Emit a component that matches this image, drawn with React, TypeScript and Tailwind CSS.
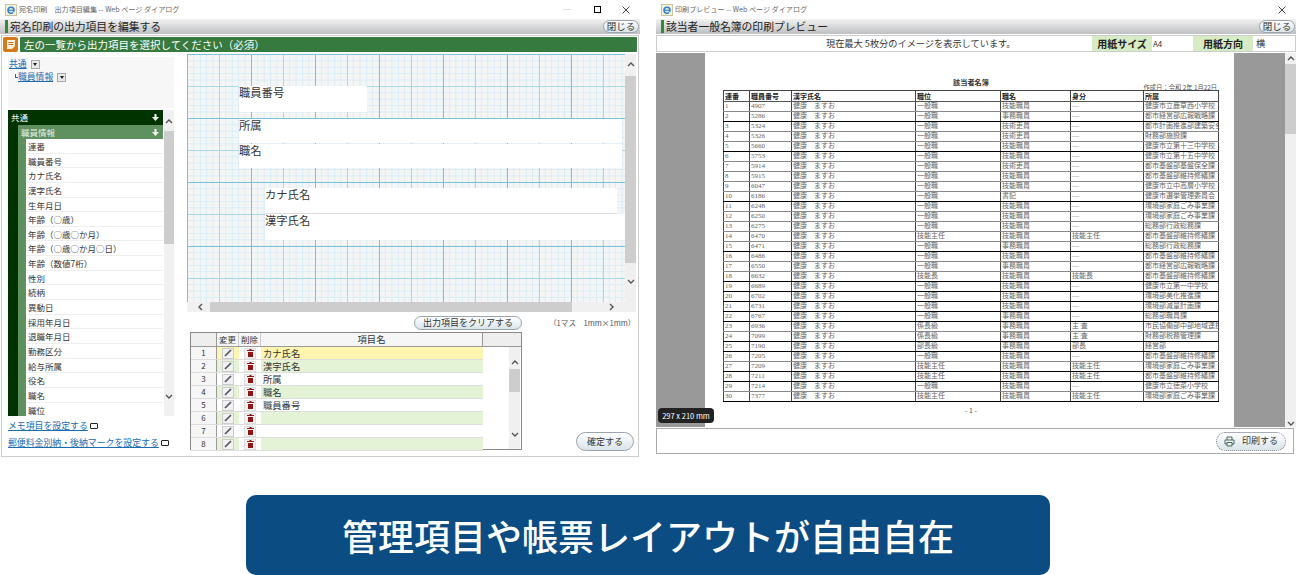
import React from "react";

const treeRows = ["連番","職員番号","カナ氏名","漢字氏名","生年月日","年齢（○歳）","年齢（○歳○か月）","年齢（○歳○か月○日）","年齢（数値7桁）","性別","続柄","異動日","採用年月日","退職年月日","勤務区分","給与所属","役名","職名","職位"];
const outputRows = ["カナ氏名","漢字氏名","所属","職名","職員番号","","",""];

const people: string[][] = [
  ["4907","一般職","技能職員","—","健康市立鹿草西小学校"],
  ["5286","一般職","事務職員","—","都市経営部広報戦略課"],
  ["5324","一般職","技術吏員","—","都市計画推進部建築安全課"],
  ["5326","一般職","技術吏員","—","財務部施設課"],
  ["5660","一般職","技能職員","—","健康市立第十三中学校"],
  ["5753","一般職","技能職員","—","健康市立第十五中学校"],
  ["5914","一般職","技術吏員","—","都市基盤部基盤保全課"],
  ["5915","一般職","技能職員","—","都市基盤部維持修繕課"],
  ["6047","一般職","技能職員","—","健康市立中高層小学校"],
  ["6186","一般職","書記","—","健康市選挙管理委員会"],
  ["6248","一般職","技能職員","—","環境部家庭ごみ事業課"],
  ["6250","一般職","技能職員","—","環境部家庭ごみ事業課"],
  ["6275","一般職","技能職員","—","総務部行政総務課"],
  ["6470","技能主任","技能職員","技能主任","都市基盤部維持修繕課"],
  ["6471","一般職","事務職員","—","総務部行政総務課"],
  ["6486","一般職","技能職員","—","都市基盤部維持修繕課"],
  ["6550","一般職","事務職員","—","都市経営部広報戦略課"],
  ["6632","技能長","技能職員","技能長","都市基盤部維持修繕課"],
  ["6689","一般職","技能職員","—","健康市立第一中学校"],
  ["6702","一般職","技能職員","—","環境部美化推進課"],
  ["6731","一般職","技能職員","—","環境部減量計画課"],
  ["6767","一般職","事務職員","—","総務部職員課"],
  ["6936","係長級","事務職員","主 査","市民協働部中部地域連携課"],
  ["7099","係長級","事務職員","主 査","財務部税務管理課"],
  ["7190","部長級","事務職員","部長","経営部"],
  ["7205","一般職","技能職員","—","都市基盤部維持修繕課"],
  ["7209","技能主任","技能職員","技能主任","環境部家庭ごみ事業課"],
  ["7211","技能主任","技能職員","技能主任","都市基盤部維持修繕課"],
  ["7214","一般職","技能職員","—","健康市立徳菜小学校"],
  ["7377","技能主任","技能職員","技能主任","環境部家庭ごみ事業課"],
];

// row lines that came out black in the downscaled shot
const blackLines = [2, 5, 10, 15, 18, 19, 20, 21, 22, 24, 25, 27, 28, 30];

const IeIcon = () => (
  <svg width="12" height="12" viewBox="0 0 12 12" className="shrink-0">
    <rect x="0.5" y="0.5" width="11" height="11" fill="#f4f1dc" stroke="#c9c4a0" />
    <circle cx="6" cy="6.2" r="3" fill="none" stroke="#2f7fd0" strokeWidth="1.5" />
    <path d="M3 6.2h6" stroke="#2f7fd0" strokeWidth="1.2" />
    <path d="M8 8.5l2 .5" stroke="#f4f1dc" strokeWidth="1.5" />
  </svg>
);

const Chevron = ({ dir }: { dir: "up" | "down" | "left" | "right" }) => {
  const d = { up: "M1 5l3-3 3 3", down: "M1 3l3 3 3-3", left: "M5 1L2 4l3 3", right: "M3 1l3 3-3 3" }[dir];
  return (
    <svg width="8" height="8" viewBox="0 0 8 8" className="shrink-0">
      <path d={d} fill="none" stroke="#555" strokeWidth="1.4" />
    </svg>
  );
};

const DownArrow = () => (
  <svg width="7" height="7" viewBox="0 0 7 7" className="mr-[1px] shrink-0">
    <path d="M2.5 0h2v3H7L3.5 7 0 3h2.5z" fill="#f2f6f2" />
  </svg>
);

const Dropdown = () => (
  <span className="inline-flex h-[9px] w-[9px] items-center justify-center border border-[#aaa] bg-[#e8e8e8]">
    <span className="h-0 w-0 border-x-[2.5px] border-t-[3px] border-x-transparent border-t-[#222]" />
  </span>
);

const PillButton = ({ label, className }: { label: string; className: string }) => (
  <div className={`flex items-center justify-center rounded-full border border-[#9aa5ad] bg-gradient-to-b from-white to-[#d9e4ea] text-[#333] ${className}`}>
    {label}
  </div>
);

const WinLink = () => (
  <span className="ml-[2px] inline-block h-[6px] w-[8px] rounded-[1px] border border-[#222]" />
);

const TitleBar = ({ title, full }: { title: string; full?: boolean }) => (
  <div className="flex h-[19px] items-center pl-[5px] text-[7.1px] text-[#666]">
    <IeIcon />
    <span className="ml-[2px] whitespace-pre">{title}</span>
    <div className="ml-auto flex items-center">
      {full && <span className="mr-[23px] h-px w-[8px] bg-[#ddd]" />}
      {full && <span className="mr-[21px] h-[7px] w-[7px] border border-black" />}
      <svg width="8" height="8" viewBox="0 0 8 8" className="mr-[10px]">
        <path d="M.5.5l7 7M7.5.5l-7 7" stroke="#444" />
      </svg>
    </div>
  </div>
);

const HeadBar = ({ title }: { title: string }) => (
  <div className="flex h-[15px] items-center bg-gradient-to-b from-[#f2f2f2] to-[#bfc0c3] pl-[5px] text-[10.8px] text-[#222]">
    <span className="mr-[2px] h-[13px] w-[3px] bg-[#2e8b3a]" />
    <span className="whitespace-nowrap">{title}</span>
    <PillButton label="閉じる" className="ml-auto mr-px h-[13px] w-[36px] text-[9.5px]" />
  </div>
);

const EditAndGrid = () => (
  <div className="flex flex-col">
    <div className="mt-[2px] flex">
      <div className="relative h-[248px] w-[438px] overflow-hidden bg-[#f5f5f5] bg-[linear-gradient(to_right,#7cc0dc_1px,transparent_1px),linear-gradient(to_bottom,#7cc0dc_1px,transparent_1px),linear-gradient(to_right,#a9d8e9_1px,transparent_1px),linear-gradient(to_bottom,#a9d8e9_1px,transparent_1px),linear-gradient(to_right,#d6edf6_1px,transparent_1px),linear-gradient(to_bottom,#d6edf6_1px,transparent_1px)] bg-[size:64px_64px,64px_64px,32px_32px,32px_32px,6.4px_6.4px,6.4px_6.4px]">
        <div className="absolute left-[52px] top-[32px] h-[26px] w-[128px] bg-white text-[11.3px] leading-[13px] text-[#333]">職員番号</div>
        <div className="absolute left-[52px] top-[65px] h-[24px] w-[383px] bg-white text-[11.3px] leading-[13px] text-[#333]">所属</div>
        <div className="absolute left-[52px] top-[90px] h-[24px] w-[383px] bg-white text-[11.3px] leading-[13px] text-[#333]">職名</div>
        <div className="absolute left-[78px] top-[134px] h-[26px] w-[352px] border-b border-[#ddd] bg-white text-[11.3px] leading-[13px] text-[#333]">カナ氏名</div>
        <div className="absolute left-[78px] top-[160px] h-[26px] w-[360px] bg-white text-[11.3px] leading-[13px] text-[#333]">漢字氏名</div>
      </div>
      <div className="flex h-[258px] w-[11px] flex-col items-center bg-[#f0f0f0]">
        <div className="flex h-[22px] items-center"><Chevron dir="up" /></div>
        <div className="h-[187px] w-full bg-[#cdcdcd]" />
        <div className="mt-[14px]"><Chevron dir="down" /></div>
      </div>
    </div>
    <div className="mt-[-10px] flex h-[10px] w-[438px] items-center bg-[#f0f0f0]">
      <div className="flex w-[23px] justify-center pl-[4px]"><Chevron dir="left" /></div>
      <div className="h-full w-[362px] bg-[#cdcdcd]" />
      <div className="flex flex-1 justify-end pr-[10px]"><Chevron dir="right" /></div>
    </div>
    <div className="mt-[4px] flex h-[14px] items-center">
      <PillButton label="出力項目をクリアする" className="ml-[227px] h-[14px] w-[108px] text-[9px]" />
      <span className="ml-[27px] whitespace-nowrap text-[7.6px] text-[#555]">（1マス　1mm×1mm）</span>
    </div>
    <div className="mt-[2px] flex">
      <OutputTable />
      <PillButton label="確定する" className="ml-[54px] mt-[100px] h-[19px] w-[58px] text-[9px]" />
    </div>
  </div>
);

const OutputTable = () => (
  <div className="ml-[3px] flex h-[118px] w-[332px] flex-col border border-[#888] text-[9.3px] text-[#333]">
    <div className="flex h-[14px] shrink-0 border-b border-[#999] bg-[#f6f6f6] leading-[13px]">
      <div className="w-[26px] border-r border-[#999] bg-[#eee]" />
      <div className="w-[22px] border-r border-[#ccc] text-center text-[8.5px]">変更</div>
      <div className="w-[22px] border-r border-[#ccc] text-center text-[8.5px]">削除</div>
      <div className="w-[222px] border-r border-[#999] text-center">項目名</div>
      <div className="flex-1 bg-[#eee]" />
    </div>
    <div className="flex min-h-0 flex-1">
      <div className="w-[292px]">
        {outputRows.map((name, i) => (
          <div key={i} className="flex h-[13px] border-b border-[#ddd] leading-[12px]">
            <div className="w-[26px] border-r border-[#999] bg-[#f6f6f6] text-center text-[8px]">{i + 1}</div>
            <div className={`flex w-[22px] items-center justify-center ${i === 0 ? "bg-[#fdf5b0]" : i % 2 === 1 ? "bg-[#e4f2d6]" : "bg-white"}`}>
              <span className="flex h-[11px] w-[12px] items-center justify-center border border-[#ccc] bg-[#f2f2f2]">
                <svg width="8" height="8" viewBox="0 0 8 8"><path d="M1 7L7 1" stroke="#556" strokeWidth="1.7" /></svg>
              </span>
            </div>
            <div className="flex w-[22px] items-center justify-center bg-white">
              <span className="flex h-[11px] w-[12px] items-center justify-center border border-[#ddd] bg-[#f2f2f2]">
                <svg width="7" height="8" viewBox="0 0 7 8"><path d="M2.5 0h2v1H7v1H0V1h2.5zM1 3h5v5H1z" fill="#8f1616" /></svg>
              </span>
            </div>
            <div className={`w-[222px] pl-[2px] ${i === 0 ? "bg-[#fdf5b0]" : i % 2 === 1 ? "bg-[#e4f2d6]" : "bg-white"}`}>{name}</div>
          </div>
        ))}
      </div>
      <div className="ml-[26px] flex w-[11px] flex-col items-center bg-[#f0f0f0]">
        <div className="flex h-[22px] items-end pb-[2px]"><Chevron dir="up" /></div>
        <div className="h-[23px] w-full bg-[#cdcdcd]" />
        <div className="mt-[38px]"><Chevron dir="down" /></div>
      </div>
    </div>
  </div>
);

const TreePane = () => (
  <div className="ml-[6px] mt-[5px] flex w-[166px] flex-col">
    <div className="h-[51px] bg-[#f7f7f7] pl-px pt-[1px] text-[8.8px] text-[#1a6bb0]">
      <div className="flex h-[12px] items-center gap-[4px]"><span className="underline">共通</span><Dropdown /></div>
      <div className="mt-px flex h-[12px] items-center pl-[6px]">
        <span className="mb-[2px] h-[4px] w-[3px] border-b border-l border-[#1a6bb0]" />
        <span className="underline">職員情報</span>
        <span className="ml-[4px] flex"><Dropdown /></span>
      </div>
    </div>
    <div className="mt-[2px] flex h-[306px]">
      <div className="flex w-[155px] flex-col overflow-hidden bg-[#003300]">
        <div className="flex h-[15px] shrink-0 items-center justify-between px-[3px] text-[8.5px] text-white">
          <span>共通</span><DownArrow />
        </div>
        <div className="ml-[10px] flex flex-col bg-[#5f9060]">
          <div className="flex h-[14px] shrink-0 items-center justify-between px-[3px] text-[8.5px] text-[#e6efe6]">
            <span>職員情報</span><DownArrow />
          </div>
          <div className="ml-[8px] bg-white">
            {treeRows.map((r) => (
              <div key={r} className="h-[14.65px] overflow-hidden whitespace-nowrap border-b border-[#eee] pl-[2px] text-[8.5px] leading-[14px] text-[#333]">{r}</div>
            ))}
          </div>
        </div>
      </div>
      <div className="ml-px flex w-[10px] flex-col items-center bg-[#f0f0f0]">
        <div className="flex h-[21px] items-end pb-[5px]"><Chevron dir="up" /></div>
        <div className="h-[113px] w-full bg-[#cdcdcd]" />
        <div className="mt-[148px]"><Chevron dir="down" /></div>
      </div>
    </div>
    <div className="mt-[3px] flex h-[14px] items-center whitespace-nowrap text-[8.9px] text-[#1a6bb0]"><span className="underline">メモ項目を設定する</span><WinLink /></div>
    <div className="mt-[3px] flex h-[14px] items-center whitespace-nowrap text-[8.9px] text-[#1a6bb0]"><span className="underline">郵便料金別納・後納マークを設定する</span><WinLink /></div>
  </div>
);

const LeftWindow = () => (
  <div className="flex h-[457px] w-[640px] flex-col">
    <TitleBar title="宛名印刷　出力項目編集 -- Web ページ ダイアログ" full />
    <HeadBar title="宛名印刷の出力項目を編集する" />
    <div className="mx-px mt-px flex min-h-0 flex-1 flex-col border border-[#ccc] bg-white">
      <div className="mt-px flex h-[15px] shrink-0 items-center">
        <div className="ml-px flex h-[15px] w-[15px] items-center justify-center rounded-[2px] bg-[#d87a1c]">
          <svg width="10" height="11" viewBox="0 0 10 11"><path d="M1 1h8v6L6 10H1z" fill="#fbf3dc" /><path d="M2.5 3.5h5M2.5 5.5h5" stroke="#c96f14" /></svg>
        </div>
        <div className="ml-[2px] mr-px flex h-[15px] flex-1 items-center rounded-[1px] bg-[#377a40] pl-[4px] text-[10.5px] text-white">左の一覧から出力項目を選択してください（必須）</div>
      </div>
      <div className="flex min-h-0 flex-1">
        <TreePane />
        <div className="ml-[13px]"><EditAndGrid /></div>
      </div>
    </div>
  </div>
);

const colClasses = ["w-[27px]", "w-[42px]", "w-[124px]", "w-[85px]", "w-[70px]", "w-[73px]", "w-[75px]"];
const headers = ["連番","職員番号","漢字氏名","職位","職名","身分","所属"];

const Cells = ({ values, bold }: { values: string[]; bold?: boolean }) => (
  <>
    {values.map((v, i) => (
      <div key={i} className={`h-full shrink-0 overflow-hidden whitespace-nowrap border-r border-[#444] pl-px ${colClasses[i]} ${bold ? "font-bold text-[#222]" : "font-['Liberation_Serif','Noto_Sans_CJK_JP',serif] text-[#666]"} ${i === 0 ? "border-l" : ""}`}>{v}</div>
    ))}
  </>
);

const PreviewPage = () => (
  <div className="h-[374px] w-[529px] bg-white pl-[18px] pt-[25px] text-[7px]">
    <div className="w-[496px] text-center text-[7.2px] font-bold leading-[9px] text-[#333]">該当者名簿</div>
    <div className="flex h-[3px] w-[496px] justify-end whitespace-nowrap pr-[2px] text-[6.3px] leading-[2px] text-[#555]">作成日：令和 2年 1月22日</div>
    <div className="w-[496px] border-t border-[#444]">
      <div className="flex h-[11px] border-b border-[#555] leading-[10px]">
        <Cells values={headers} bold />
      </div>
      {people.map((p, i) => (
        <div key={p[0]} className={`flex h-[10.03px] border-b leading-[9px] ${blackLines.includes(i + 1) ? "border-black" : "border-[#888]"}`}>
          <Cells values={[String(i + 1), p[0], "健康　ますお", p[1], p[2], p[3], p[4]]} />
        </div>
      ))}
    </div>
    <div className="mt-[3px] w-[496px] text-center text-[7px] text-[#555]">- 1 -</div>
  </div>
);

const RightWindow = () => (
  <div className="flex h-[457px] w-[640px] flex-col">
    <TitleBar title="印刷プレビュー -- Web ページ ダイアログ" />
    <HeadBar title="該当者一般名簿の印刷プレビュー" />
    <div className="mt-px flex h-[17px] items-center border border-[#ccc] bg-white pr-px text-[9.2px] text-[#333]">
      <span className="ml-[169px] w-[266px] whitespace-nowrap">現在最大 5枚分のイメージを表示しています。</span>
      <span className="flex h-full w-[60px] items-center justify-center bg-[#d7ecc4] text-[10px] font-bold text-[#222]">用紙サイズ</span>
      <span className="ml-px w-[40px] text-[8px]">A4</span>
      <span className="flex h-full w-[60px] items-center justify-center bg-[#d7ecc4] text-[10px] font-bold text-[#222]">用紙方向</span>
      <span className="ml-[3px]">横</span>
    </div>
    <div className="relative mt-px flex h-[374px] shrink-0">
      <div className="w-[49px] bg-[#999]" />
      <PreviewPage />
      <div className="w-[51px] bg-[#999]" />
      <div className="flex flex-1 flex-col items-center bg-[#f0f0f0]">
        <div className="flex h-[11px] items-center"><Chevron dir="up" /></div>
        <div className="h-[70px] w-full bg-[#cdcdcd]" />
        <div className="mt-auto"><Chevron dir="down" /></div>
      </div>
      <div className="absolute bottom-[4px] left-[2px] flex h-[15px] w-[56px] items-center justify-center rounded-[4px] bg-[#222] text-[7.5px] text-white">297 x 210 mm</div>
    </div>
    <div className="mr-[2px] mt-px flex h-[26px] items-center justify-end border border-[#aaa] bg-white pr-[7px]">
      <div className="flex h-[19px] w-[70px] items-center justify-center gap-[7px] rounded-full border border-dotted border-[#778] bg-gradient-to-b from-white to-[#d9e4ea] text-[9px] text-[#333]">
        <svg width="11" height="11" viewBox="0 0 11 11"><path d="M3 4V1h5v3M1 4h9v4H8M3 8H1V4M3 6.5h5V10H3z" fill="none" stroke="#4a6a5a" /></svg>
        <span>印刷する</span>
      </div>
    </div>
  </div>
);

export default function App() {
  return (
    <div className="h-[575px] w-[1296px] overflow-hidden bg-white font-['Noto_Sans_CJK_JP','Noto_Sans',sans-serif]">
      <div className="flex gap-4">
        <LeftWindow />
        <RightWindow />
      </div>
      <div className="mt-[38px] flex justify-center">
        <div className="flex h-[80px] w-[804px] items-center justify-center rounded-[10px] bg-[#0b4c82] text-[36px] font-medium leading-none text-white">管理項目や帳票レイアウトが自由自在</div>
      </div>
    </div>
  );
}
